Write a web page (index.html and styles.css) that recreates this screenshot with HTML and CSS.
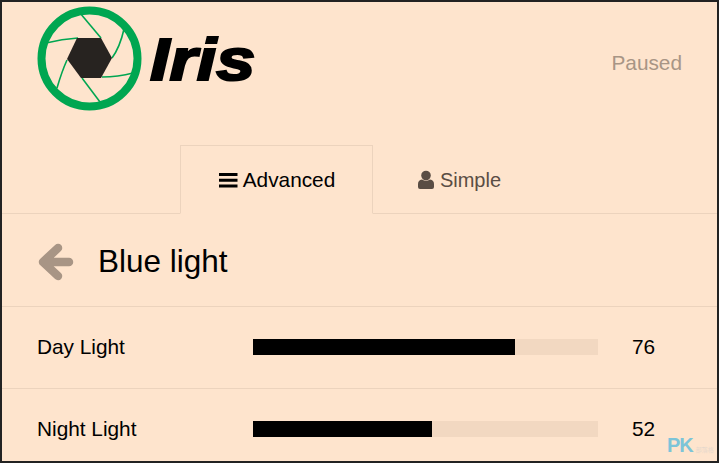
FILE: index.html
```html
<!DOCTYPE html>
<html lang="en">
<head>
    <meta charset="UTF-8">
    <meta name="viewport" content="width=device-width, initial-scale=1.0">
    <title>Iris</title>
    <link rel="stylesheet" href="styles.css">
</head>
<body>
    <div class="container">
        <header class="top">
            <div class="logo">
                <svg class="logo-mark" width="106" height="106" viewBox="0 0 106 106">
                    <circle cx="53.500" cy="53.500" r="48" fill="none" stroke="#00a651" stroke-width="8"/>
                    <g fill="none" stroke="#00a651" stroke-width="1.6">
                        <path d="M42 33 Q26 34 10 38"/>
                        <path d="M65 33 L44 8"/>
                        <path d="M76 53 Q84 42 88 24"/>
                        <path d="M66 72 Q82 72 97 68"/>
                        <path d="M46 73 L64 97"/>
                        <path d="M31 55 Q26 66 21 83"/>
                    </g>
                    <path d="M41 33 H65 L76 53 L65 73 H45 L31 54 Z" fill="#272320"/>
                </svg>
                <span class="logo-text">Iris</span>
            </div>
            <div class="status">Paused</div>
        </header>

        <nav class="tabs">
            <a class="tab active">
                <svg class="tab-icon" width="19" height="16" viewBox="0 0 19 16">
                    <path d="M0 1h18.500v3H0zM0 6.700h18.500v3H0zM0 12.400h18.500v3H0z" fill="#000"/>
                </svg>
                <span class="tab-wide">Advanced</span>
            </a>
            <a class="tab simple">
                <svg class="tab-icon" width="16" height="20" viewBox="0 0 16 20">
                    <circle cx="8" cy="5.500" r="4.800" fill="#5a4d44"/>
                    <path d="M0 17V14Q0 10 4 9.500Q8 12 12 9.500Q16 10 16 14V17Q16 19 14 19H2Q0 19 0 17Z" fill="#5a4d44"/>
                </svg>
                Simple
            </a>
        </nav>

        <div class="heading">
            <svg class="back" width="36" height="38" viewBox="0 0 36 38">
                <path d="M20 5 L5 19 L20 33 M6 19 H31" fill="none" stroke="#a89585" stroke-width="8.500" stroke-linecap="round" stroke-linejoin="round"/>
            </svg>
            <h1>Blue light</h1>
        </div>

        <div class="row">
            <span class="label">Day Light</span>
            <div class="track"><div class="fill" style="width: 76%"></div></div>
            <span class="value">76</span>
        </div>
        <div class="row">
            <span class="label">Night Light</span>
            <div class="track"><div class="fill" style="width: 52%"></div></div>
            <span class="value">52</span>
        </div>

        <div class="mark"><span class="mark-pk">PK</span><span class="mark-small">部落格</span></div>
    </div>
</body>
</html>
```

FILE: styles.css
```css
body {
    margin: 0;
    padding: 0;
    font-family: "Liberation Sans", Arial, sans-serif;
    background-color: #fee4cd;
}
.container {
    position: relative;
    box-sizing: border-box;
    width: 719px;
    height: 463px;
    overflow: hidden;
    border: 2px solid #222;
    background-color: #fee4cd;
    color: #000;
}
.top {
    display: flex;
    justify-content: space-between;
    height: 143px;
    padding: 3px 35px 0 34px;
    box-sizing: border-box;
}
.logo {
    display: flex;
    align-items: flex-start;
}
.logo-mark {
    display: block;
}
.logo-text {
    margin: 19px 0 0 8px;
    font-size: 60px;
    line-height: 72px;
    font-weight: bold;
    font-style: italic;
    -webkit-text-stroke: 2.2px #000;
    transform: scaleX(1.17);
    transform-origin: left center;
}
.status {
    margin-top: 46px;
    font-size: 20.800px;
    line-height: 24px;
    color: #a89585;
}
.tabs {
    display: flex;
    height: 69px;
    box-sizing: border-box;
    padding-left: 178px;
    border-bottom: 1px solid #ecd3bd;
}
.tab {
    display: flex;
    align-items: center;
    justify-content: center;
    gap: 5px;
    height: 68px;
    font-size: 20px;
    color: #5a4d44;
    width: 193px;
    box-sizing: border-box;
}
.tab.simple {
    width: 173px;
    gap: 6px;
    padding-top: 2px;
}
.tab.active {
    color: #000;
    height: 69px;
    padding-left: 1px;
    border: 1px solid #ecd3bd;
    border-bottom: 1px solid #fee4cd;
}
.tab-wide {
    font-size: 20.800px;
}
.tab-icon {
    display: block;
}
.heading {
    display: flex;
    align-items: center;
    height: 93px;
    box-sizing: border-box;
    padding-left: 36px;
    border-bottom: 1px solid #ecd3bd;
}
.back {
    display: block;
    margin: 3px 24px 0 0;
}
.heading h1 {
    margin: 2px 0 0;
    font-size: 31.500px;
    font-weight: normal;
}
.row {
    display: flex;
    align-items: center;
    height: 82px;
    box-sizing: border-box;
    padding: 0 0 2px 35px;
    border-bottom: 1px solid #ecd3bd;
    font-size: 20.800px;
}
.label {
    width: 216px;
}
.track {
    width: 345px;
    height: 16px;
    background-color: #f2d8c1;
}
.fill {
    height: 100%;
    background-color: #000;
}
.value {
    margin-left: 34px;
}
.mark {
    position: absolute;
    left: 665px;
    top: 431px;
    white-space: nowrap;
    color: #7cc4d8;
}
.mark-pk {
    font-size: 20px;
    font-weight: bold;
    line-height: 24px;
    letter-spacing: -1px;
}
.mark-small {
    margin-left: 3px;
    font-family: "Noto Sans CJK TC", sans-serif;
    font-size: 6px;
    color: #e6d8cc;
}
```
